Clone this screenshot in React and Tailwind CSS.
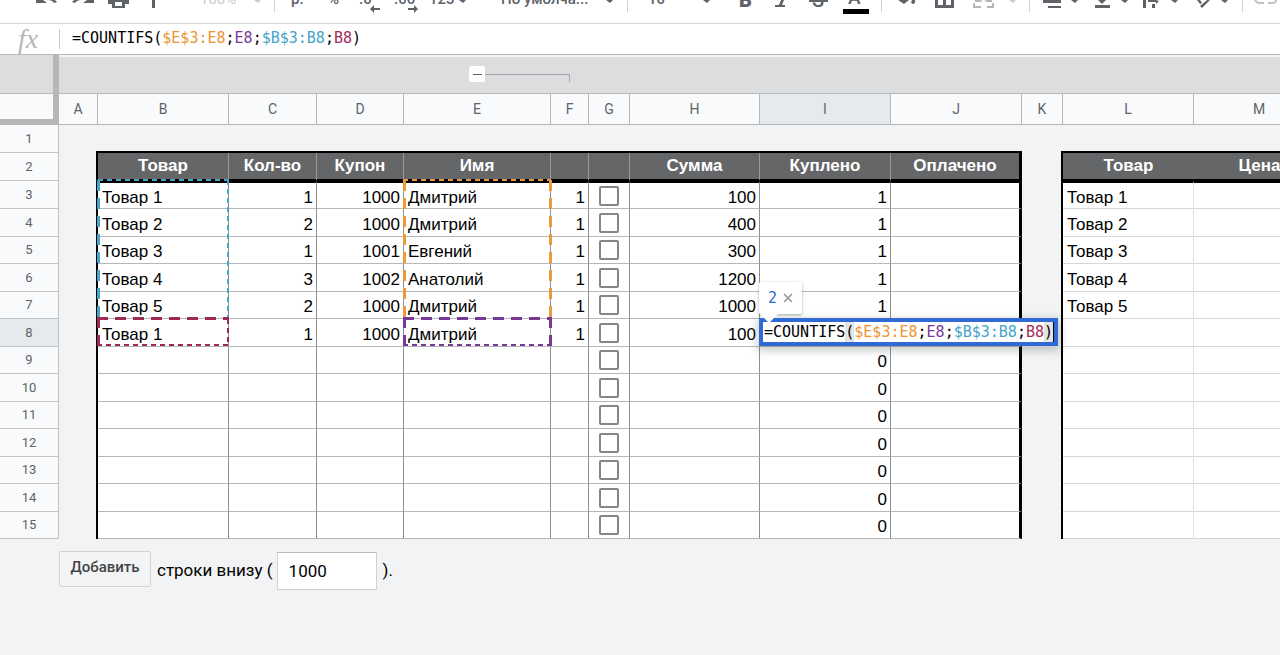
import { clsx } from 'clsx'
import { X } from 'lucide-react'

const columns = [
  { id: 'A', width: 'w-[39px]' },
  { id: 'B', width: 'w-[131px]', title: 'Товар' },
  { id: 'C', width: 'w-[88px]', title: 'Кол-во' },
  { id: 'D', width: 'w-[87px]', title: 'Купон' },
  { id: 'E', width: 'w-[147px]', title: 'Имя' },
  { id: 'F', width: 'w-[38px]' },
  { id: 'G', width: 'w-[41px]' },
  { id: 'H', width: 'w-[130px]', title: 'Сумма' },
  { id: 'I', width: 'w-[131px]', title: 'Куплено' },
  { id: 'J', width: 'w-[131px]', title: 'Оплачено' },
  { id: 'K', width: 'w-[41px]' },
  { id: 'L', width: 'w-[131px]', title: 'Товар' },
  { id: 'M', width: 'w-[131px]', title: 'Цена' },
]

const orders = {
  3: { B: 'Товар 1', C: 1, D: 1000, E: 'Дмитрий', F: 1, H: 100, I: 1, L: 'Товар 1' },
  4: { B: 'Товар 2', C: 2, D: 1000, E: 'Дмитрий', F: 1, H: 400, I: 1, L: 'Товар 2' },
  5: { B: 'Товар 3', C: 1, D: 1001, E: 'Евгений', F: 1, H: 300, I: 1, L: 'Товар 3' },
  6: { B: 'Товар 4', C: 3, D: 1002, E: 'Анатолий', F: 1, H: 1200, I: 1, L: 'Товар 4' },
  7: { B: 'Товар 5', C: 2, D: 1000, E: 'Дмитрий', F: 1, H: 1000, I: 1, L: 'Товар 5' },
  8: { B: 'Товар 1', C: 1, D: 1000, E: 'Дмитрий', F: 1, H: 100 },
}

const dataRows = [3, 4, 5, 6, 7, 8, 9, 10, 11, 12, 13, 14, 15]

function isSpacer(id) {
  return id === 'A' || id === 'K'
}

function Formula({ bracket }) {
  return (
    <>
      =COUNTIFS<span className={bracket}>(</span>
      <span className="text-[#ec9433]">$E$3:E8</span>;
      <span className="text-[#7a3b98]">E8</span>;
      <span className="text-[#43a5c7]">$B$3:B8</span>;
      <span className="text-[#a32c59]">B8</span>
      <span className={bracket}>)</span>
    </>
  )
}

function ToolbarIcons() {
  return (
    <svg className="block h-[23px] w-[1280px] shrink-0" viewBox="0 0 1280 23" fill="#5f6368" aria-hidden="true">
      <path d="M36 0v3h11l-4-3zM48 0q4 0 6 3l3-1q-1-2-3-2zM94 0v3H83l4-3zM81 0q-4 0-6 3l-3-1q1-2 3-2z" />
      <path d="M108 0h21v4h-4v4h-13V4h-4zM115 2v4h7V2z" fillRule="evenodd" />
      <path d="M152 0h3v8h-3z" />
      <path d="M254 0h7l-3 3z" fill="#c8cacc" />
      <path d="M459 0h7l-3 3zM606 0h7l-3 3zM703 0h7l-3 3z" />
      <path d="M374 8h6v2h-6v3l-4-4 4-4zM408 8h6V5l4 4-4 4v-3h-6z" />
      <path d="M898 0h11l-5 4zM912 0h3q1 3-2 4-3-1-1-4z" />
      <path d="M843 9h26v5h-26z" fill="#000" />
      <path d="M935 0h19v8h-19zM938 0v5h5V0zM946 0v5h5V0z" fillRule="evenodd" />
      <path d="M973 3h2v3h6v2h-8zM987 8V6h5V3h2v5zM975 0h5l3 1-3 1h-5zM992 0h-5l-3 1 3 1h5z" fill="#b4b6b9" />
      <path d="M1009 0h7l-3 3z" fill="#c8cacc" />
      <path d="M1043 0h18v3h-18zM1048 6h13v2h-13zM1071 0h7l-3 3zM1098 0h8l-4 4zM1095 5h15v3h-15zM1121 0h7l-3 3z" />
      <path d="M1143 0h3v8h-3zM1152 4h3v4h-3zM1148 0h8l3 1-3 3V2h-8zM1171 0h7l-3 3z" />
      <path d="M1197 0l3 4 2-1-2-3zM1207 0l-7 6 2 2 8-8zM1221 0h7l-3 3z" />
      <path d="M1255 0q1 3 5 3h4M1268 3h4q4 0 4-3" fill="none" stroke="#bfc1c4" strokeWidth="2" />
      <path d="M274 0h1v12h-1zM627 0h1v12h-1zM881 0h1v12h-1zM1029 0h1v12h-1zM1242 0h1v12h-1z" fill="#d0d2d4" />
      <g fontFamily="Roboto, sans-serif" fontSize="15" fontWeight="500">
        <text x="200" y="4" fill="#c8cacc" fontWeight="400">100%</text>
        <text x="291" y="4">р.</text>
        <text x="328" y="4">%</text>
        <text x="359" y="4">.0</text>
        <text x="394" y="4">.00</text>
        <text x="429" y="4">123</text>
        <text x="501" y="4">По умолча...</text>
        <text x="648" y="4">10</text>
        <text x="739" y="7" fontSize="20" fontWeight="900">B</text>
        <text x="812" y="7" fontSize="20">S</text>
        <text x="848" y="4" fontSize="19">A</text>
      </g>
      <path d="M775 5h4l2-5h3l-2 5h3v2h-10zM809 0h19v2h-19z" />
    </svg>
  )
}

function ColumnGroups() {
  return (
    <div className="flex h-[39px] border-b border-[#b7b8ba] bg-[#dcdddf]">
      <div className="w-[59px] shrink-0 border-r-[6px] border-[#b7b7b7]" />
      <div className="grow border-t-2 border-[#f3f4f5] pl-[410px] pt-[9px]">
        <div className="flex w-[101px] items-center">
          <button aria-label="Свернуть группу" className="flex size-4 shrink-0 items-center justify-center rounded-xs bg-white">
            <span className="h-px w-[9px] bg-[#5f6368]" />
          </button>
          <div className="mt-2 h-2 grow border-r border-t border-[#a3a5a8]" />
        </div>
      </div>
    </div>
  )
}

function RowNumber({ row }) {
  return (
    <th
      scope="row"
      className={clsx(
        'border-b border-r border-[#c0c2c4] p-0 font-["Roboto",sans-serif] text-[13px] font-normal text-[#5f6368]',
        row === 8 ? 'bg-[#e7eaed]' : 'bg-[#f8fafb]',
      )}
    >
      {row}
    </th>
  )
}

function SpacerCell() {
  return <td className="border-r-2 border-black bg-[#f1f3f4] p-0" />
}

function Cell({ column, row }) {
  const id = column.id
  if (isSpacer(id)) return <SpacerCell />

  const value = orders[row]?.[id] ?? (id === 'I' && row > 8 ? 0 : '')
  const isPriceList = id === 'L' || id === 'M'
  return (
    <td
      className={clsx(
        'border-b bg-white px-[3px] py-0 align-middle text-black',
        row === 3 && 'border-t-2 border-t-black',
        isPriceList ? 'border-b-[#d5d7d9]' : 'border-b-[#b5b7b9]',
        id === 'J' && 'border-r-3 border-r-black',
        isPriceList && 'border-r border-r-[#dfe1e3]',
        id !== 'J' && !isPriceList && 'border-r border-r-[#8d8f91]',
        typeof value === 'number' ? 'text-right' : 'text-left',
      )}
    >
      {id === 'G' ? (
        <input
          type="checkbox"
          aria-label={`Строка ${row}`}
          className="mx-auto block size-5 appearance-none rounded-xs border-2 border-[#858688] bg-white"
        />
      ) : (
        <span className="block pl-px pt-1 leading-5">{value}</span>
      )}
    </td>
  )
}

// Dashed outlines of the ranges used in the formula, drawn from the top left corner of row 1
function RangeOutlines() {
  return (
    <svg className="pointer-events-none absolute left-0 top-[31px] h-[230px] w-[560px]" viewBox="0 0 560 230" fill="none">
      <g stroke="#43a5c7">
        <path d="M98 55h131" strokeWidth="2" strokeDasharray="5 4" />
        <path d="M228 55v138" strokeWidth="2" strokeDasharray="5 4" />
        <path d="M98.500 55v138" strokeWidth="3" strokeDasharray="11 7" />
      </g>
      <g stroke="#ec9a3c">
        <path d="M403 55h148" strokeWidth="2" strokeDasharray="5 4" />
        <path d="M404.500 55v138M550.500 55v138" strokeWidth="3" strokeDasharray="11 7" />
      </g>
      <g stroke="#9c2a56">
        <path d="M97 193.500h132" strokeWidth="3" strokeDasharray="11 7" />
        <path d="M98.500 192v29" strokeWidth="3" strokeDasharray="11 7" />
        <path d="M228 194v27M97 220h132" strokeWidth="2" strokeDasharray="5 4" />
      </g>
      <g stroke="#763a94">
        <path d="M403 193.500h149" strokeWidth="3" strokeDasharray="11 7" />
        <path d="M404.500 192v29M550.500 192v29" strokeWidth="3" strokeDasharray="11 7" />
        <path d="M403 220h149" strokeWidth="2" strokeDasharray="5 4" />
      </g>
    </svg>
  )
}

function CellEditor() {
  return (
    <div
      role="textbox"
      aria-label="Ячейка I8"
      className="absolute left-[759px] top-[224px] whitespace-nowrap border-4 border-[#2f6bd3] bg-white px-px font-['DejaVu_Sans_Mono',monospace] text-[15px] leading-5 text-black shadow-[0_3px_8px_2px_rgba(60,64,67,0.25)]"
    >
      <div className="flex">
        <Formula bracket="bg-[#e3e4e6]" />
      </div>
      <span className="absolute right-0 top-0 h-5 w-px bg-black" />
      <div className="absolute -left-1 -top-10 flex h-8 w-[43px] items-center rounded-xs bg-white pl-[9px] shadow-[0_1px_3px_rgba(60,64,67,0.45)]">
        <span className="text-[#2f6bd3]">2</span>
        <button aria-label="Закрыть" className="ml-1 text-[#9a9c9f]">
          <X size={14} strokeWidth={3} />
        </button>
        <svg className="absolute left-0 top-[31px] h-[10px] w-5" viewBox="0 0 20 10" fill="#fff">
          <path d="M0 0h20l-10 10z" />
        </svg>
      </div>
    </div>
  )
}

export default function App() {
  return (
    <div className="min-h-screen overflow-hidden bg-[#f1f3f4] font-['Liberation_Sans',Arial,sans-serif]">
      <header className="overflow-hidden bg-white">
        <ToolbarIcons />
        <div className="flex h-8 items-center border-b border-t border-b-[#b7b8ba] border-t-[#d5d6d8]">
          <span className="w-[59px] pl-[18px] font-['Liberation_Serif',serif] text-[28px] italic leading-7 text-[#b5b7b9]">fx</span>
          <span className="h-5 w-px bg-[#c8cacc]" />
          <div className="flex whitespace-nowrap pb-[2px] pl-3 font-['DejaVu_Sans_Mono',monospace] text-[15px] text-black">
            <Formula />
          </div>
        </div>
      </header>
      <ColumnGroups />

      <main className="relative">
        <table className="w-[1325px] table-fixed border-separate border-spacing-0 text-[17px]">
          <colgroup>
            <col className="w-[59px]" />
            {columns.map((c) => <col key={c.id} className={c.width} />)}
          </colgroup>
          <thead>
            <tr className="h-[31px]">
              <td className="border-b-[6px] border-r-[6px] border-[#b7b7b7] bg-[#f8fafb]" />
              {columns.map((c) => (
                <th
                  key={c.id}
                  scope="col"
                  className={clsx(
                    'border-b border-r border-[#b5b7b9] p-0 font-["Roboto",sans-serif] text-[14px] font-normal text-[#5f6368]',
                    c.id === 'I' ? 'bg-[#e7eaed]' : 'bg-[#f8fafb]',
                  )}
                >
                  {c.id}
                </th>
              ))}
            </tr>
          </thead>
          <tbody>
            <tr className="h-[28px]">
              <RowNumber row={1} />
              {columns.map((c) => (
                <td
                  key={c.id}
                  className={clsx(
                    'bg-[#f1f3f4] p-0',
                    !isSpacer(c.id) && 'border-b-2 border-black',
                    // closes the corner with the thick left border of the table below
                    (c.id === 'B' || c.id === 'L') &&
                      'relative after:absolute after:-bottom-[2px] after:-left-[2px] after:size-[2px] after:bg-black',
                  )}
                />
              ))}
            </tr>
            <tr className="h-[28px]">
              <RowNumber row={2} />
              {columns.map((c) =>
                isSpacer(c.id) ? (
                  <SpacerCell key={c.id} />
                ) : (
                  <th
                    key={c.id}
                    className={clsx(
                      'border-b-2 border-b-black bg-[#656668] p-0 font-bold leading-6 text-white',
                      c.id === 'J' && 'border-r-3 border-r-black',
                      c.id !== 'J' && c.id < 'K' && 'border-r border-r-[#97999b]',
                    )}
                  >
                    {c.title}
                  </th>
                ),
              )}
            </tr>
            {dataRows.map((row) => (
              <tr key={row} className={row % 2 === 0 || row === 3 ? 'h-[28px]' : 'h-[27px]'}>
                <RowNumber row={row} />
                {columns.map((c) => <Cell key={c.id} column={c} row={row} />)}
              </tr>
            ))}
          </tbody>
        </table>
        <RangeOutlines />
        <CellEditor />
      </main>

      <form className="flex items-start pl-[59px] pt-3 font-['Roboto',sans-serif] text-black">
        <button type="button" className="h-9 w-[92px] rounded-xs border border-[#d0d2d4] bg-[#f3f4f5] pb-1 text-[15px] font-medium text-[#444]">
          Добавить
        </button>
        <label htmlFor="rows" className="pl-[6px] pt-[7px] text-[17px] leading-6">строки внизу (</label>
        <input
          id="rows"
          defaultValue="1000"
          className="ml-1 mt-px h-[38px] w-[100px] border border-[#d0d2d4] border-t-[#b9bbbd] bg-white px-[11px] text-[17px]"
        />
        <span className="pl-[6px] pt-[7px] text-[17px] leading-6">).</span>
      </form>
    </div>
  )
}
